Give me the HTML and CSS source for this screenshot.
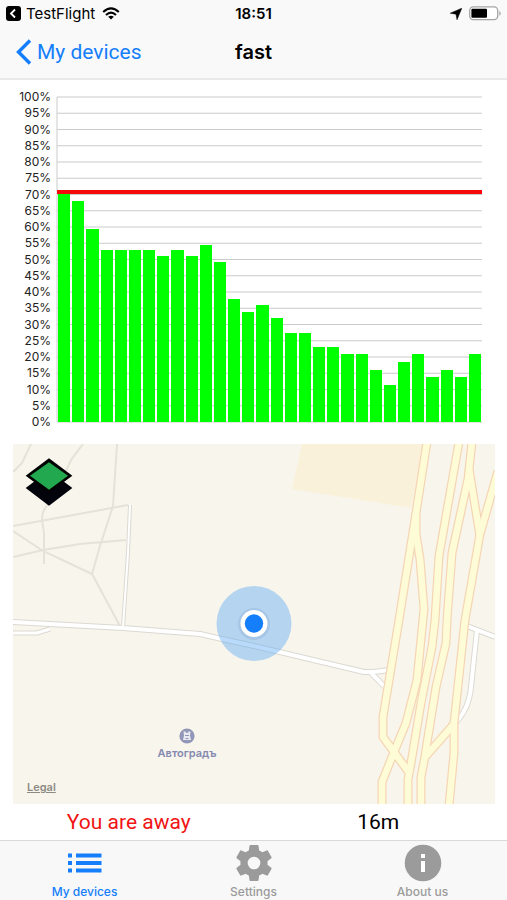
FILE: index.html
```html
<!DOCTYPE html>
<html lang="en">
  <head>
    <meta charset="UTF-8" />
    <meta name="viewport" content="width=device-width, initial-scale=1.0" />
    <title>fast</title>
    <link rel="stylesheet" href="styles.css" />
  </head>
  <body>
    <header class="top">
      <div class="status">
        <a href="#" class="status-left">
          <svg width="15" height="15" viewBox="0 0 15 15" aria-hidden="true">
            <rect width="15" height="15" rx="3" />
            <path d="M9 3.5 5 7.5l4 4" fill="none" stroke="#fff" stroke-width="1.8" />
          </svg>
          <span>TestFlight</span>
          <svg class="wifi" width="18" height="13" viewBox="0 0 18 13" aria-hidden="true">
            <path d="M1.2 5.1Q9-2.2 16.8 5.1M4 7.9q5-4.6 10 0" fill="none" stroke="#000" stroke-width="2.1" />
            <path d="M9 12.6 6.2 9.8q2.8-2.3 5.6 0z" />
          </svg>
        </a>
        <span class="clock">18:51</span>
        <div class="status-right">
          <svg width="12" height="12" viewBox="0 0 12 12" aria-hidden="true">
            <path d="M11.8.2 7 11.8 6 6.200.2 5.200z" stroke="#000" stroke-width=".5" />
          </svg>
          <svg width="32" height="15" viewBox="0 0 32 15" aria-hidden="true">
            <rect x=".7" y=".9" width="28" height="12.8" rx="3.6" fill="#fff" stroke="#a5a5a5" stroke-width="1.3" />
            <rect x="2.4" y="2.8" width="15.6" height="9" rx="1" />
            <path d="M30.3 5q1.4.6 1.4 2.4t-1.4 2.4z" fill="#a5a5a5" />
          </svg>
        </div>
      </div>
      <div class="nav">
        <a href="#" class="back">
          <svg width="16" height="26" viewBox="0 0 16 26" aria-hidden="true">
            <path d="M14 1.5 2.5 13 14 24.5" fill="none" stroke="#147efb" stroke-width="3.4" />
          </svg>
          <span>My devices</span>
        </a>
        <h1>fast</h1>
      </div>
    </header>

    <main>
      <!-- signal level -->
      <section class="chart">
        <ul class="ticks">
          <li>100%</li>
          <li>95%</li>
          <li>90%</li>
          <li>85%</li>
          <li>80%</li>
          <li>75%</li>
          <li>70%</li>
          <li>65%</li>
          <li>60%</li>
          <li>55%</li>
          <li>50%</li>
          <li>45%</li>
          <li>40%</li>
          <li>35%</li>
          <li>30%</li>
          <li>25%</li>
          <li>20%</li>
          <li>15%</li>
          <li>10%</li>
          <li>5%</li>
          <li>0%</li>
        </ul>
        <div class="plot">
          <svg class="grid" viewBox="0 0 425 325" aria-hidden="true">
            <g transform="scale(4.25 3.25)">
              <path d="M0 0V100M0 0H100M0 5H100M0 10H100M0 15H100M0 20H100M0 25H100M0 30H100M0 35H100M0 40H100M0 45H100M0 50H100M0 55H100M0 60H100M0 65H100M0 70H100M0 75H100M0 80H100M0 85H100M0 90H100M0 95H100M0 100H100" />
            </g>
          </svg>
          <div class="bars">
            <i style="height: 71%"></i>
            <i style="height: 68%"></i>
            <i style="height: 59.3%"></i>
            <i style="height: 52.8%"></i>
            <i style="height: 52.8%"></i>
            <i style="height: 52.8%"></i>
            <i style="height: 52.8%"></i>
            <i style="height: 51.1%"></i>
            <i style="height: 52.8%"></i>
            <i style="height: 51.1%"></i>
            <i style="height: 54.5%"></i>
            <i style="height: 49.3%"></i>
            <i style="height: 38%"></i>
            <i style="height: 34%"></i>
            <i style="height: 36%"></i>
            <i style="height: 32%"></i>
            <i style="height: 27.5%"></i>
            <i style="height: 27.5%"></i>
            <i style="height: 23.1%"></i>
            <i style="height: 23.1%"></i>
            <i style="height: 20.9%"></i>
            <i style="height: 20.9%"></i>
            <i style="height: 16.1%"></i>
            <i style="height: 11.3%"></i>
            <i style="height: 18.5%"></i>
            <i style="height: 20.9%"></i>
            <i style="height: 13.8%"></i>
            <i style="height: 16.1%"></i>
            <i style="height: 13.8%"></i>
            <i style="height: 20.9%"></i>
          </div>
          <svg class="limit" viewBox="0 0 425 325" aria-hidden="true">
            <path d="M0 95H425" />
          </svg>
        </div>
      </section>

      <section class="map">
        <svg class="tiles" viewBox="0 0 482 360" aria-hidden="true">
          <path d="M289 0 279 45 398 64 412 0z" fill="#faf1da" />
          <!-- paths -->
          <g fill="none" stroke="#e5e2d7" stroke-width="2">
            <path d="M18 0 9 19 0 28" />
            <path d="M70 0 58 16 53 27 33 63Q29 68 29 76L31 89V120" />
            <path d="M104 0 100 62 87 102 79 130 107 182" />
            <path d="M0 82 115 61" />
            <path d="M0 87 30 107 79 130" />
            <path d="M0 113 30 106 67 100 113 96" />
          </g>
          <!-- small roads -->
          <g fill="none" stroke-linejoin="round">
            <g stroke="#dcd9d2">
              <path d="M117 61 115 109 110 183" stroke-width="4" />
              <path d="M0 189H24L37 185" stroke-width="5" />
              <path d="M0 178 110 184 187 190Q204 194 241 202L351 228 360 228 377 226M358 229 374 245" stroke-width="6" />
              <path d="M454 182 482 193M464 186 458 243Q456 266 441 280" stroke-width="6" />
            </g>
            <g stroke="#fff">
              <path d="M117 61 115 109 110 183" stroke-width="2" />
              <path d="M0 189H24L37 185" stroke-width="3" />
              <path d="M0 178 110 184 187 190Q204 194 241 202L351 228 360 228 377 226M358 229 374 245" stroke-width="4" />
              <path d="M454 182 482 193M464 186 458 243Q456 266 441 280" stroke-width="4" />
            </g>
          </g>
          <!-- highways -->
          <defs>
            <g id="highway" fill="none" stroke-linejoin="round">
              <path d="M414 -2 403 69 386 176 370 273V293L381 308 397 330" />
              <path d="M403 69V90L407 115 411 165 404 236 393 279 381 308 369 338V362" />
              <path d="M446 -2 426 112 422 176 419 203 408 259 398 319 395 336V362" />
              <path d="M459 -2 455 35 439 109 434 176 433 199 423 243 414 299 411 318 408 333V362" />
              <path d="M456 25 467 92" />
              <path d="M485 27 467 90 452 176 441 279V309L436 362" />
              <path d="M441 280 413 312" />
            </g>
          </defs>
          <use href="#highway" stroke="#f5d5b3" stroke-width="9" />
          <use href="#highway" stroke="#fefbd7" stroke-width="6.6" />
          <!-- current location -->
          <circle cx="241" cy="179.500" r="37.500" fill="#5da9f3" fill-opacity=".43" />
          <circle cx="241" cy="180" r="16" fill="#4f7fb0" fill-opacity=".16" />
          <circle cx="241" cy="179.500" r="13.500" fill="#fff" />
          <circle cx="241" cy="179.500" r="9.200" fill="#147efb" />
        </svg>
        <button type="button" class="layers" aria-label="Layers">
          <svg width="48" height="48" viewBox="0 0 144 144" aria-hidden="true">
            <path d="M2 90 26 72H118L142 90 72 143z" fill="#03030c" />
            <path d="M72 1 142 53 72 105 2 53z" />
            <path d="M72 13 129 53 72 95 15 53z" fill="#22a84f" />
          </svg>
        </button>
        <div class="place">
          <svg width="16" height="16" viewBox="0 0 16 16" aria-hidden="true">
            <circle cx="8" cy="8" r="7.600" fill="#9297b7" />
            <path d="M4.500 3.500h2.200v1.200h2.600v-1.200h2.200l-.5 4 1 4.500H4l1-4.500z" fill="#e9eaf2" />
            <path d="M6 7.500h4M6.500 10.500h3" stroke="#9297b7" />
          </svg>
          <span>Автоградъ</span>
        </div>
        <a href="#" class="legal">Legal</a>
      </section>

      <div class="info">
        <span class="away">You are away</span>
        <span>16m</span>
      </div>
    </main>

    <nav class="tabs">
      <a href="#" class="tab active">
        <svg width="36" height="38" viewBox="0 0 36 38" aria-hidden="true">
          <path d="M1 11.500H5M1 19H5M1 26.500H5M9 11.500H34.500M9 19H34.500M9 26.500H34.500" stroke="currentColor" stroke-width="4" />
        </svg>
        <span>My devices</span>
      </a>
      <a href="#" class="tab">
        <svg width="38" height="38" viewBox="1.500 1.500 21 21" aria-hidden="true">
          <path fill="currentColor" d="M19.430 12.980c.04-.32.070-.64.070-.98s-.03-.66-.07-.98l2.110-1.650c.19-.15.240-.42.120-.64l-2-3.460c-.12-.22-.39-.3-.61-.22l-2.490 1c-.52-.4-1.080-.73-1.690-.98l-.38-2.650C14.460 2.180 14.250 2 14 2h-4c-.25 0-.46.180-.49.420l-.38 2.650c-.61.250-1.170.590-1.690.980l-2.490-1c-.23-.09-.49 0-.61.220l-2 3.460c-.13.220-.07.490.120.640l2.110 1.650c-.04.320-.07.650-.07.980s.03.660.070.980l-2.110 1.650c-.19.150-.24.420-.12.640l2 3.460c.12.220.39.300.61.220l2.490-1c.52.400 1.080.730 1.690.980l.38 2.650c.03.240.24.420.49.420h4c.25 0 .46-.18.490-.42l.38-2.650c.61-.25 1.170-.59 1.690-.98l2.490 1c.23.090.49 0 .61-.22l2-3.460c.12-.22.070-.49-.12-.64zM12 15.500a3.500 3.500 0 1 1 0-7 3.500 3.500 0 0 1 0 7z" />
        </svg>
        <span>Settings</span>
      </a>
      <a href="#" class="tab">
        <svg width="38" height="38" viewBox="0 0 38 38" aria-hidden="true">
          <circle cx="19" cy="19" r="18.300" fill="currentColor" />
          <path d="M19 17V28M19 10V14" stroke="#fff" stroke-width="4" />
        </svg>
        <span>About us</span>
      </a>
    </nav>
  </body>
</html>
```
FILE: styles.css
```css
* {
  box-sizing: border-box;
}

body {
  margin: 0;
  min-height: 100vh;
  display: flex;
  flex-direction: column;
  background: #fff;
  color: #000;
  font-family: Inter, "Liberation Sans", sans-serif;
}

a {
  color: inherit;
  text-decoration: none;
}

svg {
  display: block;
}

main {
  flex: 1;
}

.top {
  background: #f9f9f9;
  border-bottom: 2px solid #e9e9e9;
}

.status {
  display: grid;
  grid-template-columns: 1fr auto 1fr;
  align-items: center;
  height: 28px;
  padding: 0 6px 1px;
  font-size: 15px;
}

.status-left {
  display: flex;
  align-items: center;
  gap: 5px;
}

.wifi {
  margin-left: 2px;
}

.clock {
  font-weight: 600;
}

.status-right {
  display: flex;
  align-items: center;
  justify-content: flex-end;
  gap: 7px;
}

.nav {
  display: grid;
  grid-template-columns: 1fr auto 1fr;
  align-items: center;
  height: 50px;
  padding: 0 16px 2px;
}

.back {
  display: flex;
  align-items: center;
  gap: 5px;
  color: #147efb;
  font-family: Roboto, Inter, sans-serif;
  font-size: 21px;
}

.nav h1 {
  margin: 0;
  font-size: 20px;
  font-weight: 600;
}

/* chart */
.chart {
  display: grid;
  grid-template-columns: 51px 1fr;
  gap: 6px;
  padding: 17px 25px 22px 0;
}

.ticks {
  display: flex;
  flex-direction: column;
  justify-content: space-between;
  margin: -8px 0;
  padding: 0;
  list-style: none;
  text-align: right;
  font-size: 12px;
  line-height: 16px;
  color: #222;
}

.plot {
  display: grid;
  aspect-ratio: 425 / 325;
}

.grid,
.bars,
.limit {
  grid-area: 1 / 1;
  width: 100%;
  height: 100%;
  min-width: 0;
  overflow: visible;
}

.grid path,
.limit path {
  fill: none;
  stroke: #cbcbcb;
  stroke-width: 1px;
  vector-effect: non-scaling-stroke;
}

.limit path {
  stroke: #f50a0a;
  stroke-width: 4px;
}

.bars {
  display: flex;
  align-items: flex-end;
  gap: 2px;
  padding: 0 1px;
}

.bars i {
  flex: 1;
  background: #00ff00;
}

/* map */
.map {
  position: relative;
  margin: 0 12px 0 13px;
  background: #f8f5ed;
}

.tiles {
  width: 100%;
  height: auto;
}

.layers {
  position: absolute;
  top: 14px;
  left: 12px;
  padding: 0;
  border: 0;
  background: none;
}

.place {
  position: absolute;
  left: 30%;
  top: 79%;
  display: flex;
  flex-direction: column;
  align-items: center;
  gap: 2px;
  font-size: 11px;
  font-weight: 600;
  line-height: 14px;
  color: #858ab0;
}

.legal {
  position: absolute;
  left: 14px;
  bottom: 10px;
  font-size: 11px;
  font-weight: 600;
  line-height: 14px;
  color: #8e8b84;
  text-decoration: underline;
}

.info {
  display: flex;
  padding: 0 4px;
  font-family: Roboto, Inter, sans-serif;
  font-size: 21px;
  line-height: 36px;
  text-align: center;
}

.info span {
  flex: 1;
}

.info .away {
  color: #f01414;
}

.tabs {
  display: flex;
  background: #f8f8f8;
  border-top: 1px solid #d9d9d9;
}

.tab {
  flex: 1;
  display: flex;
  flex-direction: column;
  align-items: center;
  gap: 2px;
  padding: 3px 0 1px;
  font-size: 12px;
  font-weight: 500;
  line-height: 16px;
  color: #9b9b9b;
}

.tab.active {
  color: #147efb;
}
```
